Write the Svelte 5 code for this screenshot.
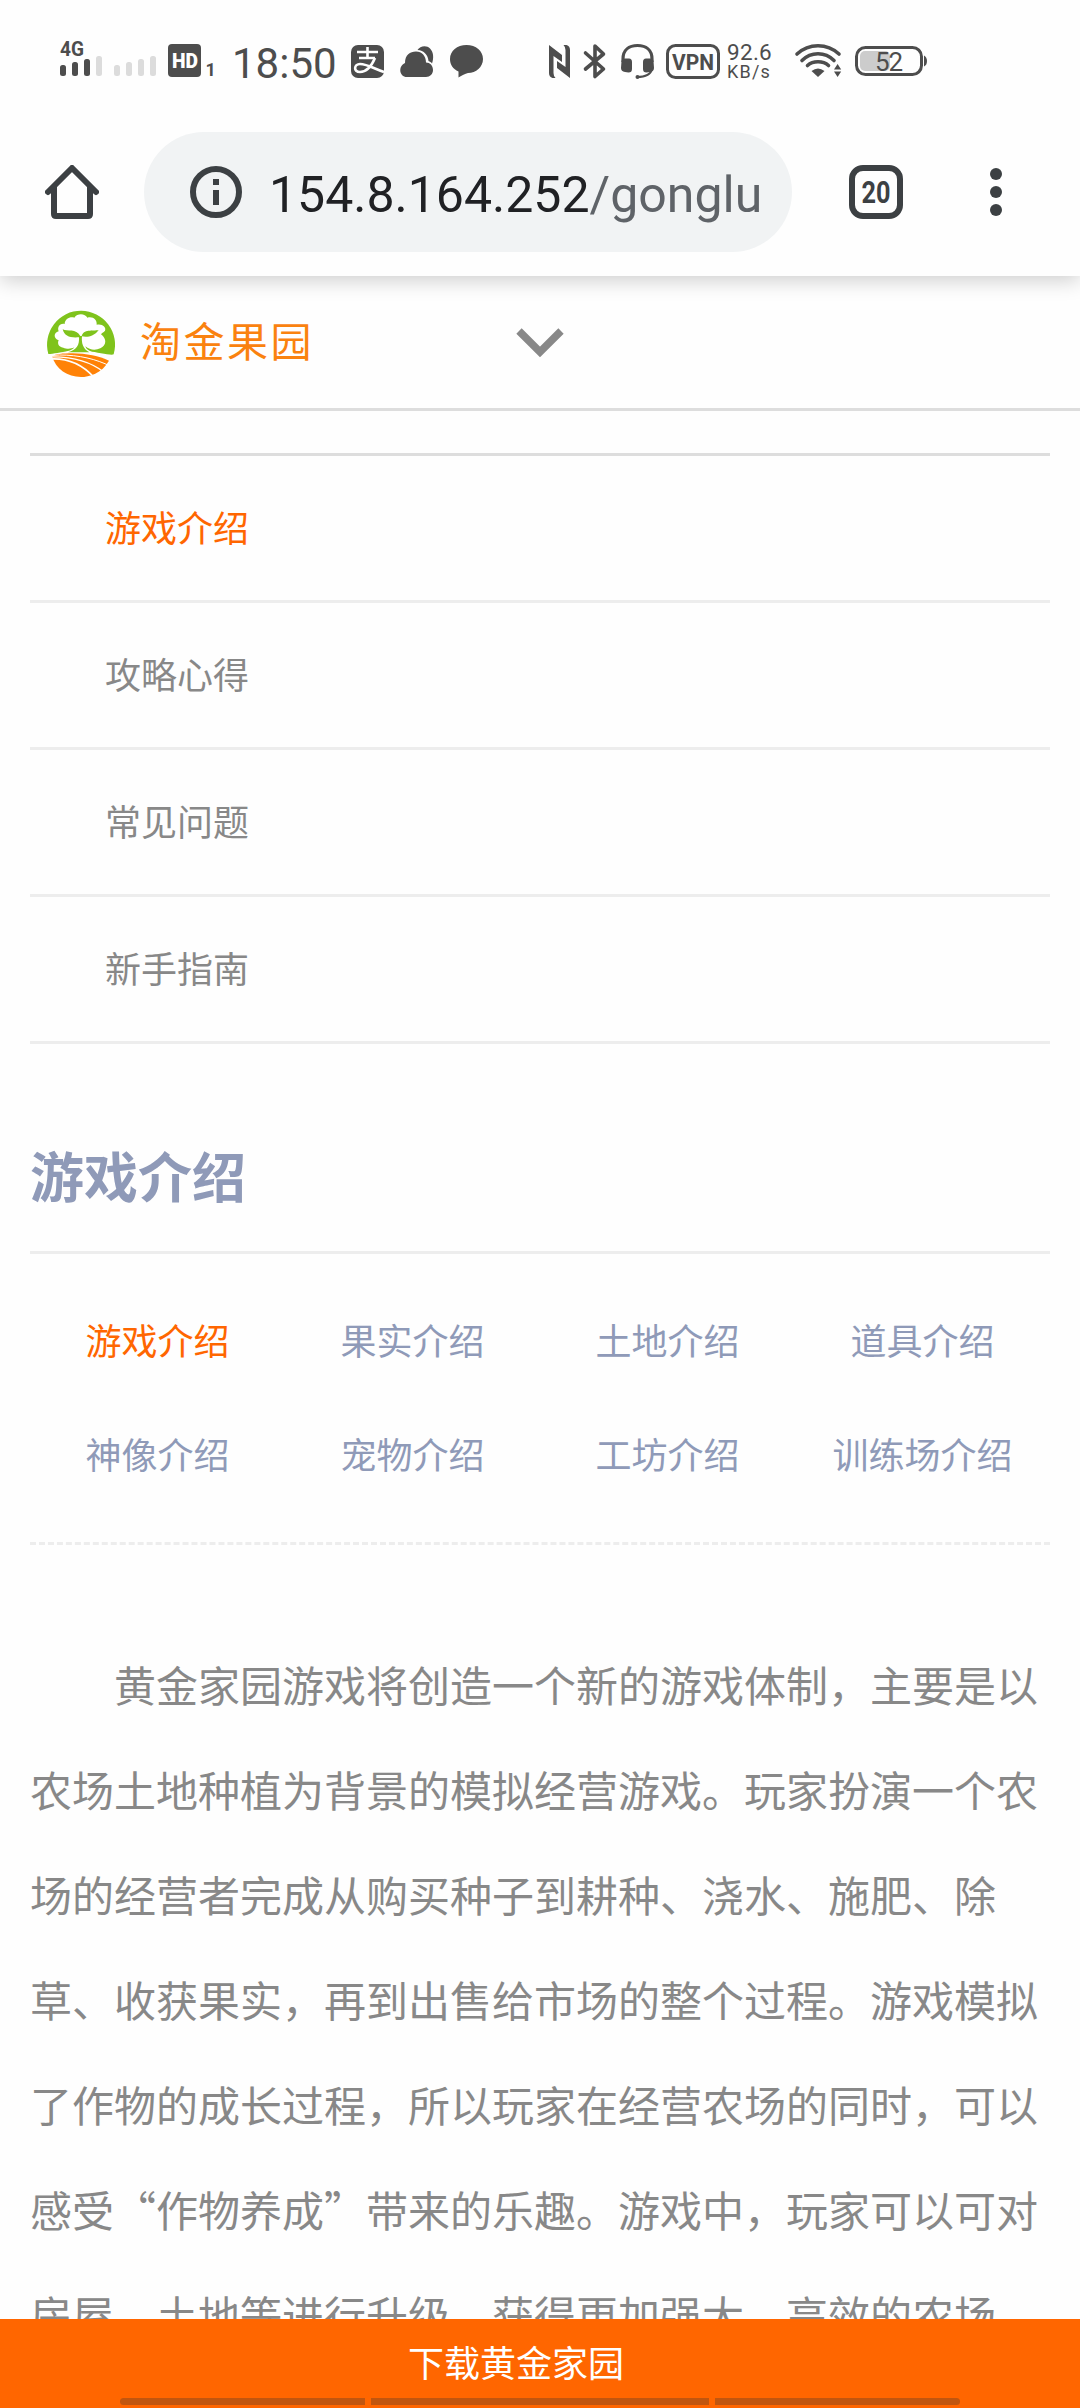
<script>
  const menuItems = ['游戏介绍', '攻略心得', '常见问题', '新手指南'];
  const subItems = [
    '游戏介绍', '果实介绍', '土地介绍', '道具介绍',
    '神像介绍', '宠物介绍', '工坊介绍', '训练场介绍'
  ];
  const intro =
    '黄金家园游戏将创造一个新的游戏体制，主要是以农场土地种植为背景的模拟经营游戏。玩家扮演一个农场的经营者完成从购买种子到耕种、浇水、施肥、除草、收获果实，再到出售给市场的整个过程。游戏模拟了作物的成长过程，所以玩家在经营农场的同时，可以感受“作物养成”带来的乐趣。游戏中，玩家可以可对房屋、土地等进行升级，获得更加强大、高效的农场';

  let activeMenu = 0;
  let activeSub = 0;
</script>

<div class="phone" lang="zh-CN">
  <div class="status">
    <svg class="ic signal" width="42" height="40" viewBox="0 0 42 40">
      <text x="0" y="16" font-size="21" font-weight="700" textLength="24" lengthAdjust="spacingAndGlyphs">4G</text>
      <rect x="0" y="25" width="6" height="11" rx="2.5" />
      <rect x="12" y="22" width="6" height="14" rx="2.5" />
      <rect x="24" y="19" width="6" height="17" rx="2.5" />
      <rect x="36" y="16" width="6" height="20" rx="2.5" class="dim" />
    </svg>
    <svg class="ic signal2" width="42" height="40" viewBox="0 0 42 40">
      <g class="dim">
        <rect x="0" y="25" width="6" height="11" rx="2.5" />
        <rect x="12" y="22" width="6" height="14" rx="2.5" />
        <rect x="24" y="19" width="6" height="17" rx="2.5" />
        <rect x="36" y="16" width="6" height="20" rx="2.5" />
      </g>
    </svg>
    <svg class="ic hd" width="46" height="40" viewBox="0 0 46 40">
      <rect x="0" y="4" width="33" height="33" rx="4" />
      <text x="4" y="28" font-size="21" font-weight="900" fill="#fff" textLength="26" lengthAdjust="spacingAndGlyphs">HD</text>
      <text x="37.500" y="36" font-size="18" font-weight="700">1</text>
    </svg>
    <span class="time">18:50</span>
    <svg class="ic alipay" width="33" height="40" viewBox="0 0 33 40">
      <rect x="0" y="5" width="33" height="33" rx="7" />
      <g fill="none" stroke="#fff" stroke-width="2.6">
        <path d="M6 12H27M16.500 7V17.500M8 18H24" />
        <path d="M24 18C21 25 16 32 9 32C2 32 3 24 9 24C16 24 24 29 33 32" />
      </g>
    </svg>
    <svg class="ic cloud" width="33" height="40" viewBox="0 0 33 40">
      <path d="M17.500 10C20 5.500 27 5 30 8.500C33.500 12 34 18 32 23.500C31 22 30 21.500 28.500 21C28 15 24 10.500 17.500 10Z" />
      <path d="M7 37C-1 37-2 26 5 23C5 15 10 11.500 16 11.500C22 11.500 26 16 26 22.500C30 22.500 33 25.500 33 30C33 34 30 37 26 37Z" />
    </svg>
    <svg class="ic bubble" width="33" height="40" viewBox="0 0 33 40">
      <path d="M16.500 5C26 5 33 11 33 19C33 27 26 33 18 33C15 34 12 35 8.500 37.500L8.500 31.500C3 29 0 24.500 0 19C0 11 7 5 16.500 5Z" />
    </svg>
    <svg class="ic nfc" width="23" height="40" viewBox="0 0 23 40">
      <path d="M1 5L14 15V22L5.500 16V33Q5.500 36 7.500 38H4.500Q1 37 1 33Z" />
      <path d="M22 38L9 28V21L17.500 27V10Q17.500 7 15.500 5H18.500Q22 6 22 10Z" />
    </svg>
    <svg class="ic bt" width="23" height="40" viewBox="0 0 23 40">
      <path class="line" stroke-width="3.6" stroke-linecap="round" stroke-linejoin="round" d="M2.500 13L20.500 29L12 36.500V6L20.500 14L2.500 29" />
    </svg>
    <svg class="ic headset" width="33" height="40" viewBox="0 0 33 40">
      <path class="line" stroke-width="3.200" d="M2 22V19C2 10 8 5.500 16.500 5.500C25 5.500 31 10 31 19V22" />
      <path d="M0.500 21Q1 18.500 4 18.500H8Q11 18.500 11 22V29Q11 32.500 7.500 32.500L4 32Q0 31.500 0 28ZM32.500 21Q32 18.500 29 18.500H25Q22 18.500 22 22V29Q22 32.500 25.500 32.500L29 32Q33 31.500 33 28Z" />
      <path class="line" stroke-width="2" stroke-linecap="round" d="M31 29C30 34 25 37 16 37" />
      <circle cx="16.500" cy="37" r="2" />
    </svg>
    <svg class="ic vpn" width="54" height="40" viewBox="0 0 54 40">
      <rect class="line" x="1.500" y="5.500" width="51" height="32" rx="8" stroke-width="3" />
      <text x="6" y="30" font-size="22.500" font-weight="700" textLength="42" lengthAdjust="spacingAndGlyphs">VPN</text>
    </svg>
    <div class="speed">
      <span class="rate">92.6</span>
      <span class="unit">KB/s</span>
    </div>
    <svg class="ic wifi" width="47" height="40" viewBox="0 0 47 40">
      <g class="line" stroke-width="3.600" stroke-linecap="round">
        <path d="M2 14C14 3 32 3 44 14" />
        <path d="M7 20.500C16 11.500 30 11.500 39 20.500" />
        <path d="M12.500 25.500C18 20.500 28 20.500 33.500 25.500" />
      </g>
      <path d="M16.500 31Q23 26 29.500 31L23 37Z" />
      <path d="M39 29.500L42.600 24L46.200 29.500ZM39 31.500H46.200L42.600 37Z" />
    </svg>
    <svg class="ic battery" width="73" height="40" viewBox="0 0 73 40">
      <rect x="5" y="11" width="30" height="20" rx="5" fill="#ccc" />
      <rect class="line" x="1.500" y="7.500" width="65" height="27" rx="9" stroke-width="3" />
      <path d="M69 15.500Q72 17 72 21Q72 25 69 26.500Z" />
      <text x="20" y="30.500" font-size="26" textLength="28">52</text>
    </svg>
  </div>

  <div class="toolbar">
    <svg class="home" width="54" height="54" viewBox="0 0 54 54">
      <path d="M3 27L27 3L51 27M9 22V49Q9 51 11 51H43Q45 51 45 49V22" fill="none" stroke="#3c4043" stroke-width="6" stroke-linecap="round" stroke-linejoin="round" />
    </svg>
    <div class="omnibox">
      <svg width="52" height="52" viewBox="0 0 52 52">
        <circle cx="26" cy="26" r="23" fill="none" stroke="#3c4043" stroke-width="6" />
        <path d="M23 13H29V19H23ZM23 24H29V39H23Z" fill="#3c4043" />
      </svg>
      <div class="url">154.8.164.252<span>/gonglu</span></div>
    </div>
    <svg class="tabs" width="54" height="54" viewBox="0 0 54 54">
      <rect x="3" y="3" width="48" height="48" rx="11" fill="none" stroke="#3c4043" stroke-width="6" />
      <text x="12.500" y="38" font-size="31" font-weight="700" fill="#3c4043" textLength="29" lengthAdjust="spacingAndGlyphs">20</text>
    </svg>
    <svg class="more" width="12" height="48" viewBox="0 0 12 48">
      <g fill="#3c4043">
        <circle cx="6" cy="6" r="6" />
        <circle cx="6" cy="24" r="6" />
        <circle cx="6" cy="42" r="6" />
      </g>
    </svg>
  </div>

  <header>
    <svg class="logo" width="68" height="68" viewBox="3 3 204 204">
      <!-- sky, crown, then trunk with its two leaves -->
      <path fill="#7fc31c" d="M7 138A102 102 0 1 1 203 139C196 143 152 133 130 130L66 131C45 132 22 137 7 138Z" />
      <path fill="#fff" d="M52 119C36 118 34 104 38 97C22 92 22 74 38 70C32 54 46 44 56 48C56 32 74 24 85 29C95 14 118 17 124 29C141 24 154 36 152 50C168 46 182 57 177 68C172 75 167 74 165 79C183 92 182 113 163 121C148 128 131 126 118 115C120 123 128 129 143 134L42 134C68 130 80 126 85 118C74 124 61 123 52 119Z" />
      <path fill="#7fc31c" d="M50 64C64 72 90 60 103 84C104 88 103 89 99 88C72 90 55 85 50 64ZM158 66C140 70 112 62 107 85C124 88 144 86 158 66Z" />
      <path fill="#7fc31c" d="M99 84H108C106 104 110 122 130 133H66C92 126 101 112 99 84Z" />
      <!-- ploughed field -->
      <path fill="#ff8207" d="M18 145C28 138 50 136 80 136C120 136 160 145 189 158C168 196 128 207 105 207C64 207 30 184 18 145Z" />
      <g fill="none" stroke="#fff">
        <path stroke-width="3" d="M12 143L40 141C100 141 150 153 194 175" />
        <path stroke-width="4" d="M10 147C75 145 130 158 176 194" />
        <path stroke-width="5" d="M10 153C65 149 108 168 144 208" />
      </g>
    </svg>
    <span class="brand">淘金果园</span>
    <svg class="chevron" width="48" height="30" viewBox="0 0 48 30">
      <path d="M3 3L24 24L45 3" fill="none" stroke="#888" stroke-width="7.500" />
    </svg>
  </header>

  <main>
    <ul class="menu">
      {#each menuItems as item, i}
        <li class:active={i === activeMenu}>{item}</li>
      {/each}
    </ul>

    <h1>游戏介绍</h1>

    <div class="sub">
      {#each subItems as item, i}
        <span class:active={i === activeSub}>{item}</span>
      {/each}
    </div>

    <p>{intro}</p>
  </main>

  <footer>
    <span class="download">下载黄金家园</span>
    <div class="gesture">
      <i class="first"></i><i class="mid"></i><i class="last"></i>
    </div>
  </footer>
</div>

<style>
  :global(body) {
    background: #fefefe;
  }
  .phone {
    width: 1080px;
    height: 2408px;
    overflow: hidden;
    display: flex;
    flex-direction: column;
    background: #fefefe;
    font-family: Roboto, "Noto Sans CJK SC", sans-serif;
  }

  /* status bar */
  .status {
    display: flex;
    flex: none;
    height: 84px;
    box-sizing: border-box;
    padding: 40px 0 0 60px;
    background: #fefefe;
    color: #4d4d4d;
    position: relative;
    z-index: 2;
  }
  .ic {
    flex: none;
    overflow: visible;
    fill: #4d4d4d;
  }
  .dim {
    fill: #dcdcdc;
  }
  .line {
    fill: none;
    stroke: #4d4d4d;
  }
  .signal2, .hd {
    margin-left: 12px;
  }
  .time {
    width: 102px;
    margin-left: 18px;
    margin-right: 1px;
    font-size: 42px;
    line-height: 48px;
    white-space: nowrap;
  }
  .alipay {
    margin-left: 16px;
  }
  .cloud {
    margin-left: 16px;
  }
  .bubble {
    margin-left: 17px;
  }
  .nfc {
    margin-left: 65px;
  }
  .bt {
    margin-left: 12px;
  }
  .headset {
    margin-left: 15px;
  }
  .vpn {
    margin-left: 12px;
  }
  .speed {
    display: flex;
    flex-direction: column;
    width: 46px;
    margin-left: 7px;
    white-space: nowrap;
  }
  .rate {
    padding-top: 1px;
    font-size: 22.5px;
    line-height: 22px;
    letter-spacing: 0.3px;
  }
  .unit {
    font-size: 18px;
    line-height: 17px;
    letter-spacing: 1.2px;
  }
  .wifi {
    margin-left: 22px;
  }
  .battery {
    margin-left: 13px;
  }

  /* browser toolbar */
  .toolbar {
    display: flex;
    flex: none;
    align-items: center;
    height: 192px;
    box-sizing: border-box;
    padding: 24px 0 0 45px;
    background: #fefefe;
    position: relative;
    z-index: 1;
    box-shadow: 0 4px 20px rgba(0, 0, 0, 0.2);
  }
  .omnibox {
    display: flex;
    align-items: center;
    width: 648px;
    height: 120px;
    box-sizing: border-box;
    margin-left: 45px;
    padding-left: 46px;
    border-radius: 60px;
    background: #f1f3f4;
  }
  .url {
    margin-left: 27px;
    padding-top: 5px;
    font-size: 50px;
    line-height: 66px;
    white-space: nowrap;
    color: #202124;
  }
  .url span {
    color: #5f6368;
  }
  .tabs {
    margin-left: 57px;
  }
  .more {
    margin-left: 87px;
  }

  /* site header */
  header {
    display: flex;
    flex: none;
    align-items: center;
    height: 135px;
    box-sizing: border-box;
    padding: 2px 0 0 47px;
    border-bottom: 3px solid #ddd;
  }
  .brand {
    width: 176px;
    margin-left: 25px;
    font-size: 41px;
    line-height: 60px;
    letter-spacing: 2.5px;
    color: #fa820f;
    white-space: nowrap;
  }
  .chevron {
    margin-left: 200px;
  }

  main {
    flex: 1;
    min-height: 0;
    overflow: hidden;
    padding: 42px 30px 0;
    font-family: "Noto Sans CJK SC", sans-serif;
  }
  .menu {
    margin: 0;
    padding: 0;
    list-style: none;
    border-top: 3px solid #ddd;
  }
  .menu li {
    height: 147px;
    box-sizing: border-box;
    padding-left: 75px;
    border-bottom: 3px solid #ededed;
    font-size: 36px;
    line-height: 140px;
    color: #888;
  }
  .menu .active, .sub .active {
    color: #f60;
  }
  h1 {
    margin: 0;
    padding-top: 83px;
    height: 124px;
    border-bottom: 3px solid #ededed;
    font-size: 54px;
    font-weight: 700;
    line-height: 96px;
    color: #8f9ab8;
  }
  .sub {
    display: grid;
    grid-template-columns: repeat(4, 1fr);
    padding: 28px 0 32px;
    border-bottom: 3px dashed #ededed;
  }
  .sub span {
    text-align: center;
    font-size: 36px;
    line-height: 114px;
    color: #8f9ab8;
  }
  p {
    margin: 86px 0 0;
    font-size: 42px;
    line-height: 105px;
    text-indent: 2em;
    color: #888;
  }

  /* download bar with the gesture hints under it */
  footer {
    display: flex;
    flex: none;
    flex-direction: column;
    align-items: center;
    justify-content: space-between;
    height: 89px;
    box-sizing: border-box;
    padding-bottom: 3px;
    background: #f60;
  }
  .download {
    margin-right: 48px;
    font-size: 36px;
    line-height: 76px;
    height: 76px;
    padding-top: 8px;
    box-sizing: border-box;
    color: #fff;
  }
  .gesture {
    display: flex;
    gap: 6px;
  }
  .gesture i {
    width: 245px;
    height: 7px;
    background: #c1560f;
  }
  .gesture .mid {
    width: 338px;
  }
  .gesture .first {
    border-radius: 4px 0 0 4px;
  }
  .gesture .last {
    border-radius: 0 4px 4px 0;
  }
</style>
